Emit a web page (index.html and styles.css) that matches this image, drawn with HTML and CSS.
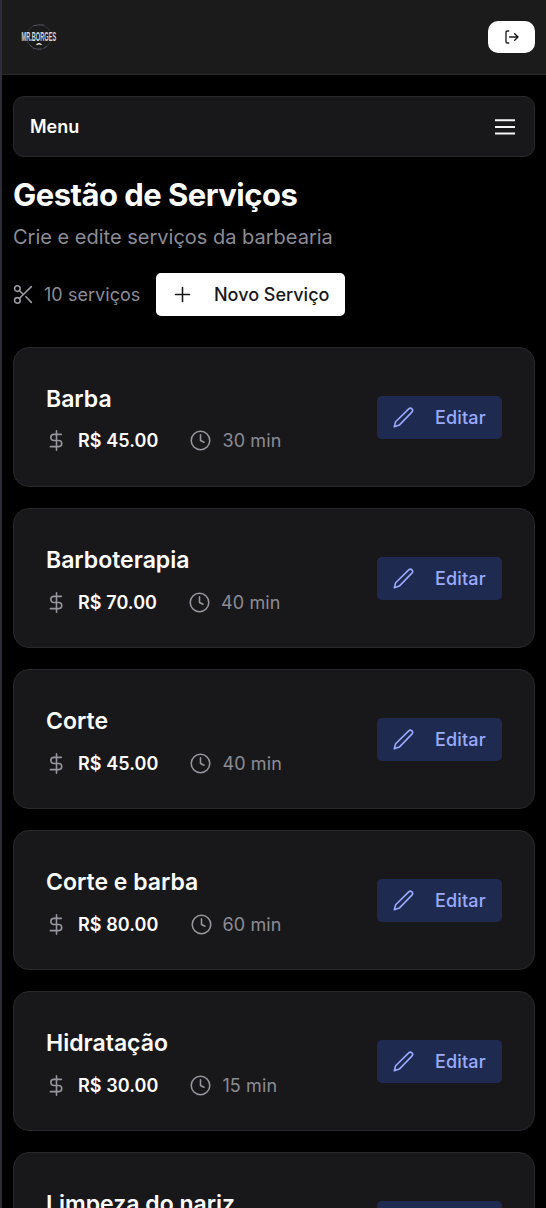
FILE: index.html
```html
<!DOCTYPE html>
<html lang="pt-BR">
<head>
<meta charset="utf-8">
<meta name="viewport" content="width=device-width, initial-scale=1">
<title>Gestão de Serviços</title>
<link rel="stylesheet" href="styles.css">
</head>
<body>
<svg class="defs" aria-hidden="true">
  <symbol id="dollar" viewBox="0 0 24 24"><path d="M12 1v22M17.500 5H9a3.500 3.500 0 0 0 0 7h5.500a3.500 3.500 0 0 1 0 7H5"/></symbol>
  <symbol id="clock" viewBox="0 0 24 24"><circle cx="12" cy="12" r="10.600"/><path d="M12 5.500V12l4 2"/></symbol>
  <symbol id="pencil" viewBox="0 0 24 24"><path d="M18 2.200a2.500 2.500 0 0 1 3.600 3.600L7.200 20.700 1.500 22.500l1.500-5.700Z"/></symbol>
</svg>
<div class="app">
  <header class="topbar">
    <svg class="logo" viewBox="0 0 36 28" role="img" aria-label="Mr. Borges">
      <circle class="ring" cx="18" cy="14" r="12.500"/>
      <rect class="band" x="0" y="8" width="36" height="10"/>
      <path class="marks" d="M13 2.500h4M18 2h5M9 22l2 2M12 25l3 .8M17 26h4M23 25l3-2"/>
      <text class="brand" transform="translate(0.500 18) scale(0.450 1)">MR.BORGES</text>
      <path class="stache" d="M14.500 21.300c1.500 0 2-1.600 3.500-1.300 1.500-.3 2 1.300 3.500 1.300-1 .9-2.700.7-3.500 0-.8.700-2.500.9-3.500 0Z"/>
    </svg>
    <button class="logout" aria-label="Sair">
      <svg viewBox="0 0 24 24"><path d="M7 3H5a2 2 0 0 0-2 2v14a2 2 0 0 0 2 2h2M8.500 12H21M16 7l5 5-5 5"/></svg>
    </button>
  </header>
  <main class="content">
    <nav class="menu"><span>Menu</span>
      <svg class="bars" viewBox="0 0 20 16"><path d="M0 1.200h20M0 7.900h20M0 14.500h20"/></svg>
    </nav>
    <h1 class="title">Gestão de Serviços</h1>
    <p class="subtitle">Crie e edite serviços da barbearia</p>
    <div class="actions">
      <svg class="icon scissors" viewBox="0 0 24 24"><circle cx="5" cy="5.200" r="3.200"/><path d="M7.500 7.700 12 12M21 3 7.500 16.300"/><circle cx="5" cy="18.800" r="3.200"/><path d="M14.800 14.500 21 21"/></svg>
      <span class="count">10 serviços</span>
      <button class="new"><svg class="icon" viewBox="0 0 24 24"><path d="M4 12h16M12 4v16"/></svg><span>Novo Serviço</span></button>
    </div>
    <section class="list">
      <article class="card"><div><h2 class="name">Barba</h2><div class="meta"><svg class="icon"><use href="#dollar"/></svg><span class="price">R$ 45.00</span><svg class="icon"><use href="#clock"/></svg><span class="time">30 min</span></div></div><button class="edit"><svg class="icon"><use href="#pencil"/></svg><span>Editar</span></button></article>
      <article class="card"><div><h2 class="name">Barboterapia</h2><div class="meta"><svg class="icon"><use href="#dollar"/></svg><span class="price">R$ 70.00</span><svg class="icon"><use href="#clock"/></svg><span class="time">40 min</span></div></div><button class="edit"><svg class="icon"><use href="#pencil"/></svg><span>Editar</span></button></article>
      <article class="card"><div><h2 class="name">Corte</h2><div class="meta"><svg class="icon"><use href="#dollar"/></svg><span class="price">R$ 45.00</span><svg class="icon"><use href="#clock"/></svg><span class="time">40 min</span></div></div><button class="edit"><svg class="icon"><use href="#pencil"/></svg><span>Editar</span></button></article>
      <article class="card"><div><h2 class="name">Corte e barba</h2><div class="meta"><svg class="icon"><use href="#dollar"/></svg><span class="price">R$ 80.00</span><svg class="icon"><use href="#clock"/></svg><span class="time">60 min</span></div></div><button class="edit"><svg class="icon"><use href="#pencil"/></svg><span>Editar</span></button></article>
      <article class="card"><div><h2 class="name">Hidratação</h2><div class="meta"><svg class="icon"><use href="#dollar"/></svg><span class="price">R$ 30.00</span><svg class="icon"><use href="#clock"/></svg><span class="time">15 min</span></div></div><button class="edit"><svg class="icon"><use href="#pencil"/></svg><span>Editar</span></button></article>
      <article class="card"><div><h2 class="name">Limpeza do nariz</h2></div><button class="edit"></button></article>
    </section>
  </main>
</div>
</body>
</html>
```
FILE: styles.css
```css
* { box-sizing: border-box; }
body { margin: 0; background: #000; color: #fff; font-family: Inter, "Liberation Sans", sans-serif; font-size: 18px; }
h1, h2, p { margin: 0; }
button { border: 0; padding: 0; font: inherit; letter-spacing: inherit; }
svg { fill: none; stroke: currentColor; stroke-width: 2; stroke-linecap: round; stroke-linejoin: round; flex: none; }
.defs { display: none; }
.app { height: 1208px; overflow: hidden; border-left: 2px solid #2c2d38; }
.topbar { height: 75px; background: #1b1b1b; border-bottom: 1px solid #2b2b2c; display: flex; align-items: center; justify-content: space-between; padding: 0 11px 0 19px; }
.logo { width: 36px; height: 28px; stroke-width: .5; overflow: visible; }
.ring { stroke: #3c3e45; stroke-width: .7; }
.band { fill: #1b1b1b; stroke: none; }
.marks { stroke: #606269; stroke-width: .8; stroke-dasharray: 1 1; }
.brand { font: 700 12.500px "Liberation Sans", sans-serif; fill: #d8d8d8; stroke: none; }
.stache { fill: #eee; stroke: none; }
.logout { width: 47px; height: 32px; border-radius: 10px; background: #fff; color: #18181b; display: flex; align-items: center; justify-content: center; }
.logout svg { width: 16px; height: 16px; }
.content { padding: 21px 11px 0 11px; }
.menu { height: 61px; border: 1px solid #29292b; border-radius: 11px; background: #18181a; display: flex; align-items: center; justify-content: space-between; padding: 0 19px 0 16px; font-weight: 600; font-size: 18px; }
.bars { width: 20px; height: 16px; stroke-linecap: butt; color: #f4f4f5; }
.title { margin-top: 18px; font-size: 31px; line-height: 40px; font-weight: 700; letter-spacing: -.53px; white-space: nowrap; }
.subtitle { margin-top: 7px; font-size: 20px; line-height: 30px; color: #8c8c94; white-space: nowrap; }
.actions { margin-top: 21px; height: 43px; display: flex; align-items: center; }
.icon { width: 21px; height: 21px; stroke-width: 1.800; }
.scissors { color: #9a9aa2; margin-right: 10px; }
.count { width: 112px; color: #8c8c94; font-size: 18px; letter-spacing: .05px; white-space: nowrap; }
.new { width: 189px; height: 43px; border-radius: 5px; background: #fff; color: #18181b; display: flex; align-items: center; padding-left: 16px; gap: 21px; font-weight: 500; white-space: nowrap; }
.list { margin-top: 31px; display: grid; gap: 21px; }
.card { height: 140px; border: 1px solid #29292b; border-radius: 16px; background: #18181a; display: flex; align-items: flex-start; justify-content: space-between; padding: 35px 32px 0; }
.name { font-size: 23px; line-height: 32px; font-weight: 600; white-space: nowrap; }
.meta { margin-top: 13px; height: 26px; display: flex; align-items: center; color: #96969e; white-space: nowrap; }
.card:first-child .meta { margin-top: 12px; }
.price { margin: 0 32px 0 11px; color: #fff; font-weight: 600; letter-spacing: .08px; }
.time { margin-left: 11px; color: #8c8c94; letter-spacing: .1px; }
.edit { width: 125px; height: 43px; margin-top: 13px; border-radius: 5px; background: #1f2a50; color: #9aaaff; display: flex; align-items: center; padding-left: 16px; gap: 21px; font-weight: 500; letter-spacing: .15px; }
```
